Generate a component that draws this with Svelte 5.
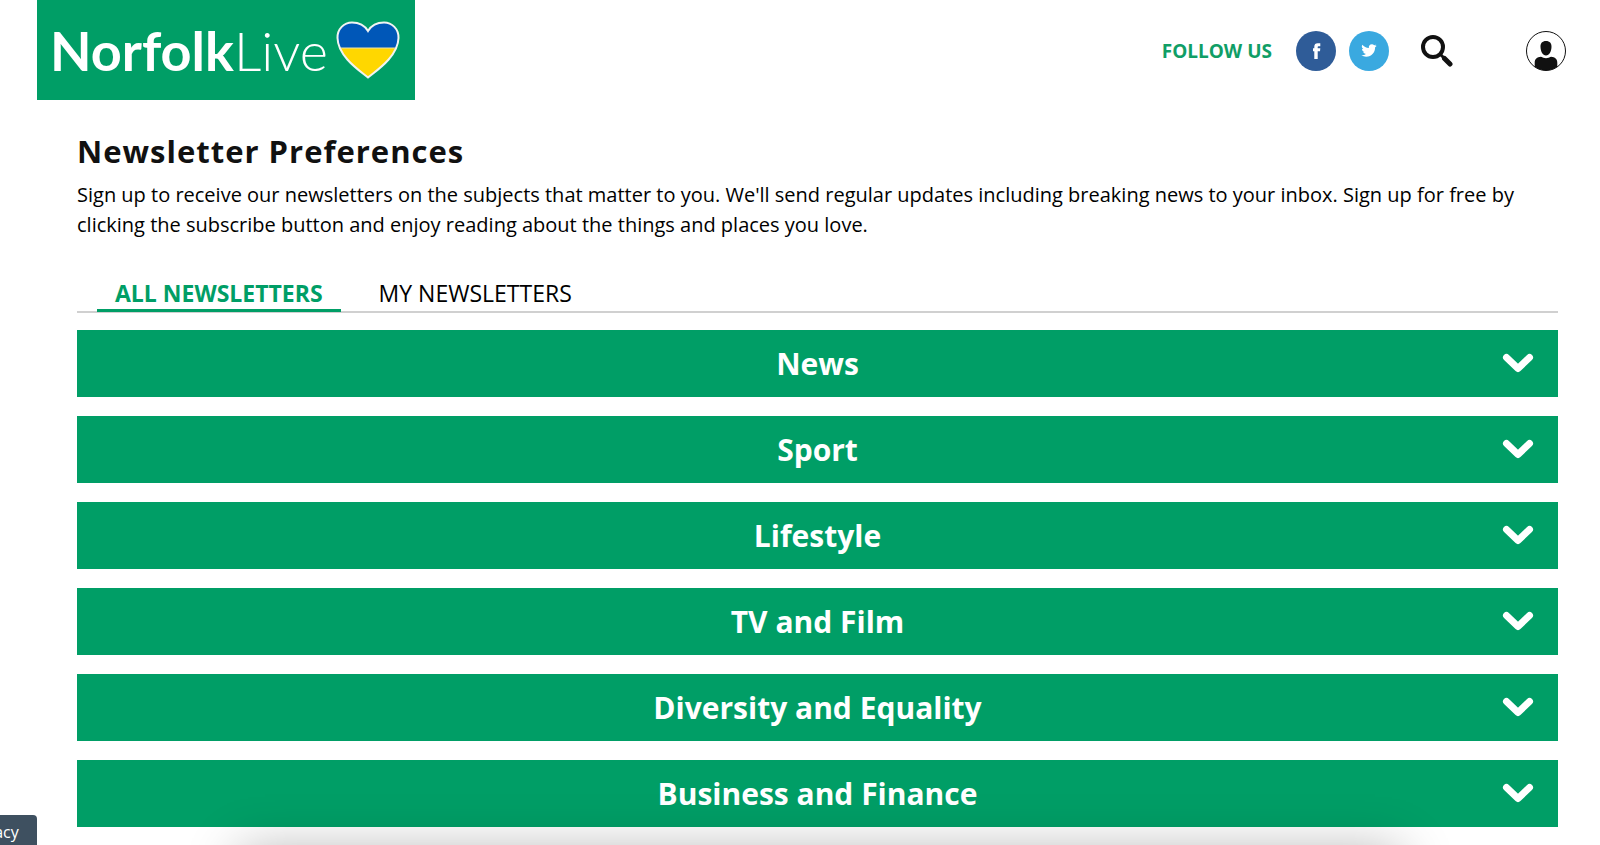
<script>
  const categories = ['News', 'Sport', 'Lifestyle', 'TV and Film', 'Diversity and Equality', 'Business and Finance'];

  let tab = $state('all');
  let open = $state(null);

  function toggle(name) {
    open = open === name ? null : name;
  }
</script>

<div class="page">
  <header>
    <a class="logo" href="/" aria-label="NorfolkLive">
      <span class="wordmark"><b>Norfolk</b>Live</span>
      <svg class="heart" viewBox="0 0 64 58" aria-hidden="true">
        <defs>
          <clipPath id="heart">
            <path d="M32 56.5C25 50.5 2 36 1.500 17C1.200 8 8 1.500 16 1.500C23 1.500 29 5 32 10C35 5 41 1.500 48 1.500C56 1.500 62.800 8 62.500 17C62 36 39 50.500 32 56.500Z" />
          </clipPath>
        </defs>
        <g clip-path="url(#heart)">
          <rect width="64" height="27" fill="#0057b8" />
          <rect y="27" width="64" height="31" fill="#ffd700" />
          <path d="M0 27H64" stroke="#e8e3b0" stroke-width="1" />
        </g>
        <path d="M32 56.5C25 50.5 2 36 1.500 17C1.200 8 8 1.500 16 1.500C23 1.500 29 5 32 10C35 5 41 1.500 48 1.500C56 1.500 62.800 8 62.500 17C62 36 39 50.500 32 56.500Z" fill="none" stroke="#f1f4f2" stroke-width="2" />
      </svg>
    </a>

    <div class="tools">
      <span class="follow">FOLLOW US</span>
      <a class="social facebook" href="/facebook" aria-label="Facebook">
        <svg width="40" height="40" viewBox="0 0 40 40">
          <path fill="#fff" d="M18.300 28V20.300H17V17.300H18.300V15.700C18.300 13.300 19.500 12.200 21.700 12.200H24.300V15.200H22.900C22 15.200 21.700 15.500 21.700 16.300V17.300H24.300L24 20.300H21.700V28Z" />
        </svg>
      </a>
      <a class="social twitter" href="/twitter" aria-label="Twitter">
        <svg width="40" height="40" viewBox="0 0 40 40">
          <path fill="#fff" transform="translate(12.300 11.800) scale(.64)" d="M23.950 4.570a10 10 0 0 1-2.820.77 4.960 4.960 0 0 0 2.160-2.720c-.95.550-2 .95-3.130 1.180a4.920 4.920 0 0 0-8.380 4.480C7.690 8.090 4.070 6.130 1.640 3.160a4.930 4.930 0 0 0 1.520 6.570 4.900 4.900 0 0 1-2.230-.61v.06a4.920 4.920 0 0 0 3.950 4.830 5 5 0 0 1-2.210.08 4.940 4.940 0 0 0 4.600 3.420A9.870 9.870 0 0 1 0 19.540a13.990 13.990 0 0 0 7.550 2.210c9.050 0 14-7.500 14-13.980 0-.21 0-.42-.02-.63a9.940 9.940 0 0 0 2.460-2.550z" />
        </svg>
      </a>
      <button class="icon search" aria-label="Search">
        <svg width="32" height="32" viewBox="0 0 32 32" fill="none" stroke="#111">
          <circle cx="12" cy="12" r="10" stroke-width="4" />
          <path d="M19.500 19.500L23 23" stroke-width="3" />
          <path d="M23.500 23.500L29 29" stroke-width="5" stroke-linecap="round" />
        </svg>
      </button>
      <button class="icon" aria-label="My account">
        <svg width="40" height="40" viewBox="0 0 40 40">
          <clipPath id="avatar"><circle cx="20" cy="20" r="19.500" /></clipPath>
          <g clip-path="url(#avatar)" fill="#111">
            <path d="M20 10C23.700 10 25.700 12.200 25.500 16C25.300 20.500 23.300 24.500 20 24.500C16.700 24.500 14.700 20.500 14.500 16C14.300 12.200 16.300 10 20 10Z" />
            <path d="M8.700 40V32C8.700 28 11 26 15 25.800C18 27.700 22 27.700 25 25.800C29 26 31.300 28 31.300 32V40Z" />
          </g>
          <circle cx="20" cy="20" r="19.500" fill="none" stroke="#111" />
        </svg>
      </button>
    </div>
  </header>

  <main>
    <h1>Newsletter Preferences</h1>
    <p class="intro">
      Sign up to receive our newsletters on the subjects that matter to you. We'll send regular updates including breaking news to your inbox. Sign up for free by clicking the subscribe button and enjoy reading about the things and places you love.
    </p>

    <nav class="tabs">
      <button class:active={tab === 'all'} onclick={() => (tab = 'all')}>ALL NEWSLETTERS</button>
      <button class:active={tab === 'mine'} onclick={() => (tab = 'mine')}>MY NEWSLETTERS</button>
    </nav>

    <div class="categories">
      {#each categories as name}
        <button class="category" aria-expanded={open === name} onclick={() => toggle(name)}>
          <span>{name}</span>
          <svg width="32" height="20" viewBox="0 0 32 20" aria-hidden="true">
            <path d="M4.500 4.500L16 15.500L27.500 4.500" fill="none" stroke="#fff" stroke-width="7" stroke-linecap="round" stroke-linejoin="round" />
          </svg>
        </button>
      {/each}
    </div>
  </main>

  <button class="privacy">Privacy</button>
  <div class="sheet"></div>
</div>

<style>
  :global(body) {
    margin: 0;
    background: #fff;
    overflow: hidden;
  }

  .page {
    font-family: "Open Sans", "Noto Sans", sans-serif;
    color: #000;
  }

  button {
    font-family: inherit;
    border: 0;
    background: none;
    cursor: pointer;
  }

  svg {
    display: block;
  }

  header {
    display: flex;
    justify-content: space-between;
    padding: 0 34px 0 37px;
  }

  .logo {
    display: flex;
    align-items: center;
    gap: 8px;
    height: 100px;
    padding: 0 15px 0 13px;
    background: #009e66;
    color: #fff;
    text-decoration: none;
  }

  .wordmark {
    font-family: Lato, sans-serif;
    font-size: 54px;
    font-weight: 300;
    line-height: 100px;
    padding-top: 2px;
  }

  .wordmark b {
    font-weight: 700;
  }

  .heart {
    width: 64px;
    height: 58px;
  }

  .tools {
    display: flex;
    align-items: center;
    padding-top: 1px;
  }

  .follow {
    margin-right: 24px;
    color: #109e66;
    font-size: 19px;
    font-weight: 700;
  }

  .social {
    border-radius: 50%;
  }

  .facebook {
    margin-right: 13px;
    background: #2f5c98;
  }

  .twitter {
    background: #3aa9e0;
  }

  .icon {
    padding: 0;
  }

  .search {
    margin: 0 73px 0 32px;
  }

  main {
    padding: 28px 42px 0 77px;
  }

  h1 {
    margin: 0;
    color: #111;
    font-size: 31px;
    line-height: 46px;
    letter-spacing: 1px;
  }

  .intro {
    margin: 6px 0 0;
    font-size: 20px;
    line-height: 30px;
  }

  .tabs {
    display: flex;
    margin-top: 37px;
    padding-left: 20px;
    border-bottom: 2px solid #d0d0d0;
  }

  .tabs button {
    margin-bottom: -1px;
    padding: 0 18px;
    border-bottom: 3px solid transparent;
    font-size: 23px;
    line-height: 32px;
  }

  .tabs button + button {
    margin-left: 20px;
  }

  .tabs .active {
    border-color: #009e66;
    color: #009e66;
    font-weight: 700;
  }

  .categories {
    display: flex;
    flex-direction: column;
    gap: 19px;
    margin-top: 17px;
  }

  .category {
    display: grid;
    grid-template-columns: 1fr auto 1fr;
    align-items: center;
    height: 67px;
    padding: 0 24px 1px;
    background: #009e66;
    color: #fff;
    font-size: 30px;
    font-weight: 700;
  }

  .category span {
    grid-column: 2;
  }

  .category svg {
    justify-self: end;
  }

  .privacy {
    position: fixed;
    bottom: -4px;
    left: -52px;
    height: 34px;
    padding: 0 18px;
    border-radius: 4px;
    background: #3e5060;
    color: #fff;
    font-size: 16px;
  }

  /* panel waiting below the fold, only its shadow shows */
  .sheet {
    position: fixed;
    top: 100%;
    right: 200px;
    left: 240px;
    height: 200px;
    background: #fff;
    box-shadow: 0 6px 50px rgba(0, 0, 0, .3);
    pointer-events: none;
  }
</style>
